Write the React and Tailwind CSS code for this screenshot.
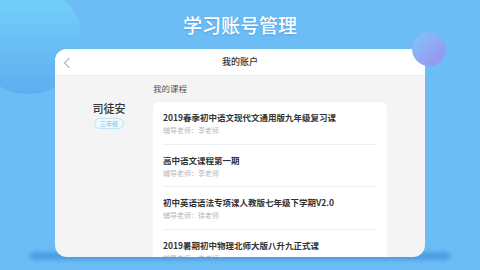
const courses = [
  { title: "2019春季初中语文现代文通用版九年级复习课", teacher: "李老师" },
  { title: "高中语文课程第一期", teacher: "李老师" },
  { title: "初中英语语法专项课人教版七年级下学期V2.0", teacher: "徐老师" },
  { title: "2019暑期初中物理北师大版八升九正式课", teacher: "朱老师" },
];

export default function App() {
  return (
    <div
      className="relative h-[270px] w-[480px] overflow-hidden bg-[#6cbdf5]"
      style={{ fontFamily: '"Noto Sans CJK SC", "Noto Sans", sans-serif' }}
    >
      {/* 背景装饰 */}
      <div className="absolute left-[-26px] top-[-14px] h-[108px] w-[108px] rounded-full bg-gradient-to-b from-[#74d3f9] to-[#5fadf1]" />
      <div className="absolute left-[30px] right-[30px] top-[252px] h-[8px] rounded-full bg-[#3d8fd8] opacity-70 blur-[2px]" />

      <div className="relative flex flex-col items-center">
        <h1 className="pt-[11px] text-[19px] font-medium leading-[28px] text-white [text-shadow:0_1px_2px_rgba(40,110,190,0.35)]">
          学习账号管理
        </h1>

        <div className="mt-[10px] flex h-[208px] w-[370px] flex-col overflow-hidden rounded-[12px] bg-[#f4f4f4]">
          <div className="relative flex h-[27px] shrink-0 items-center justify-center border-b border-[#ececec] bg-white">
            <svg
              className="absolute left-[8px] top-[8px]"
              width="8"
              height="12"
              viewBox="0 0 8 12"
              fill="none"
              stroke="#8a8a8a"
              strokeWidth="1"
            >
              <path d="M6.5 1 L1.5 6 L6.5 11" />
            </svg>
            <span className="text-[9px] font-medium text-[#333]">我的账户</span>
          </div>

          <div className="flex min-h-0 flex-1">
            <div className="flex w-[98px] shrink-0 flex-col items-center pl-[10px] pt-[25px]">
              <span className="text-[11px] font-medium leading-[14px] text-[#333]">司徒安</span>
              <span className="mt-[3px] rounded-full border border-[#bfe3f7] bg-[#eef8fd] px-[5px] text-[6px] leading-[9px] text-[#7cc3ea]">
                三年级
              </span>
            </div>

            <div className="flex w-[234px] flex-col">
              <span className="pt-[6px] text-[8.5px] leading-[12px] text-[#555]">我的课程</span>
              <div className="mt-[8px] flex flex-col rounded-[6px] bg-white">
                {courses.map((c, i) => (
                  <div key={i} className="mx-[10px] h-[42.5px] border-b border-[#f0f0f0] pt-[9px]">
                    <div className="text-[8.5px] font-semibold leading-[13px] text-[#333]">{c.title}</div>
                    <div className="mt-[1px] text-[7px] leading-[10px] text-[#b8b8b8]">
                      辅导老师：{c.teacher}
                    </div>
                  </div>
                ))}
              </div>
            </div>
          </div>
        </div>
      </div>

      <div className="absolute left-[412px] top-[32px] h-[34px] w-[34px] rounded-full bg-gradient-to-br from-[#7cc8f6] to-[#9a8cf0]" />
    </div>
  );
}
